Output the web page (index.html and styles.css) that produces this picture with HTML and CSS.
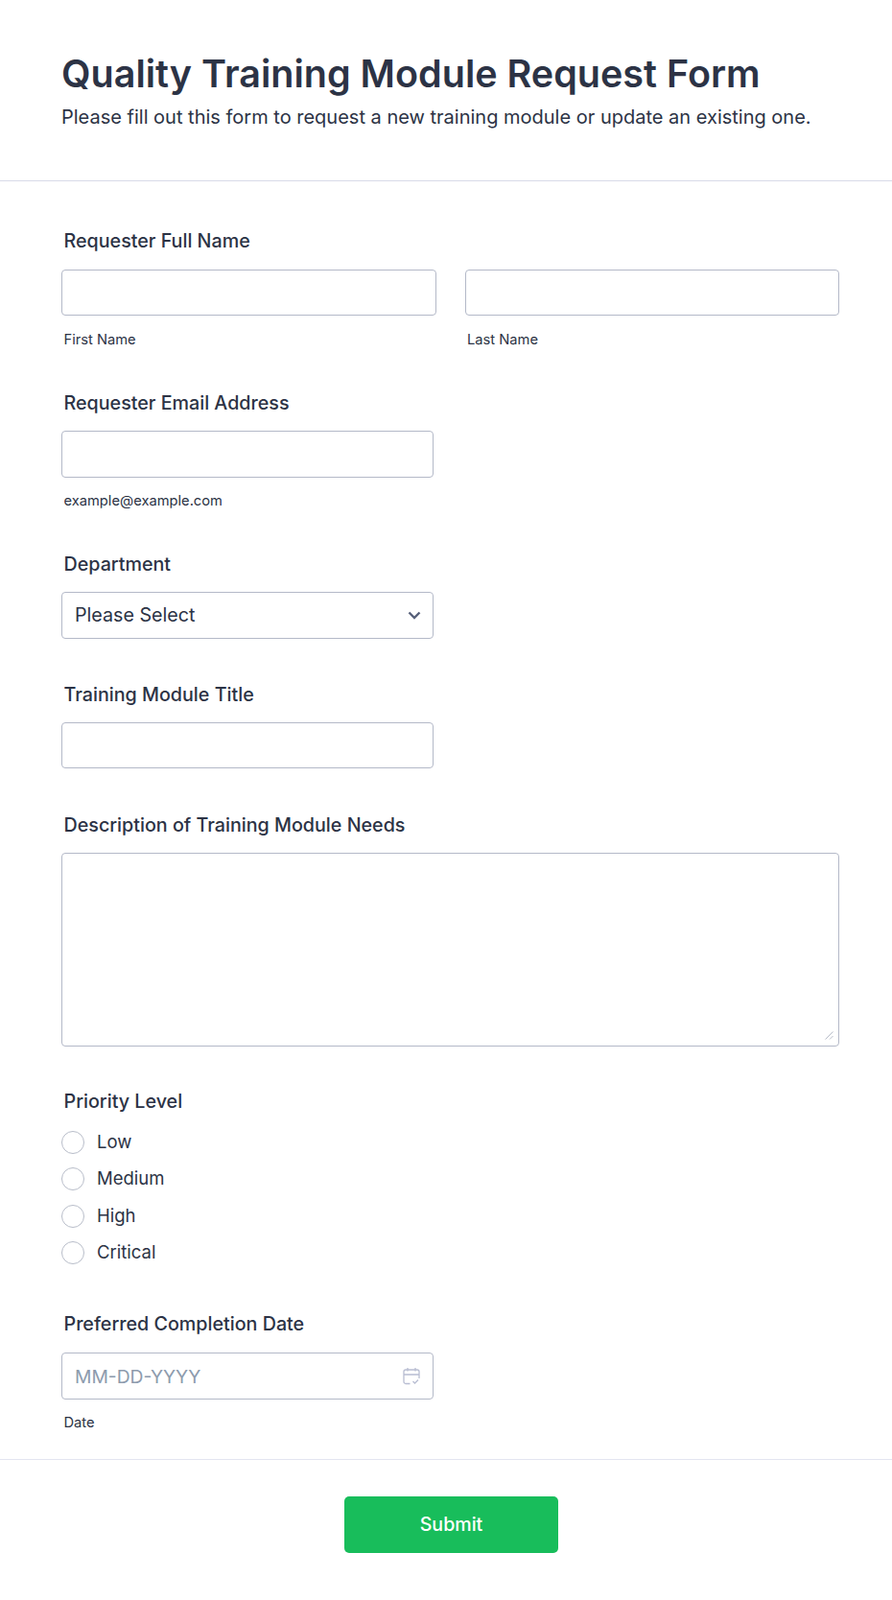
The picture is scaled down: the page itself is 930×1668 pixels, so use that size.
FILE: index.html
```html
<!DOCTYPE html>
<html lang="en">
<head>
  <meta charset="UTF-8" />
  <title>Quality Training Module Request Form</title>
  <link rel="stylesheet" href="styles.css">
</head>
<body>

<header class="form-header">
  <h1>Quality Training Module Request Form</h1>
  <p>Please fill out this form to request a new training module or update an existing one.</p>
</header>

<form class="form-body">
  <div class="field with-sub">
    <label class="field-label">Requester Full Name</label>
    <div class="name-row">
      <div class="name-col">
        <input class="text-input" type="text">
        <span class="sub-label">First Name</span>
      </div>
      <div class="name-col">
        <input class="text-input" type="text">
        <span class="sub-label">Last Name</span>
      </div>
    </div>
  </div>

  <div class="field with-sub">
    <label class="field-label">Requester Email Address</label>
    <input class="text-input short" type="text">
    <span class="sub-label">example@example.com</span>
  </div>

  <div class="field">
    <label class="field-label">Department</label>
    <div class="select-box short">
      <span>Please Select</span>
      <svg class="chevron" width="14" height="9" viewBox="0 0 14 9"><path d="M1.500 1.500 7 7l5.500-5.500" fill="none" stroke="#57607a" stroke-width="2.400"/></svg>
    </div>
  </div>

  <div class="field module-title">
    <label class="field-label">Training Module Title</label>
    <input class="text-input short" type="text">
  </div>

  <div class="field description">
    <label class="field-label">Description of Training Module Needs</label>
    <div class="area-wrap">
      <textarea class="text-area"></textarea>
      <svg class="area-grip" width="9" height="9" viewBox="0 0 9 9" fill="none" stroke="#b8bdc9" stroke-width="1"><path d="M.5 8.500l8-8M5 8.500l3.500-3.500"/></svg>
    </div>
  </div>

  <div class="field priority">
    <label class="field-label">Priority Level</label>
    <div class="radio-list">
      <div class="radio-row"><span class="radio"></span>Low</div>
      <div class="radio-row"><span class="radio"></span>Medium</div>
      <div class="radio-row"><span class="radio"></span>High</div>
      <div class="radio-row"><span class="radio"></span>Critical</div>
    </div>
  </div>

  <div class="field last">
    <label class="field-label date-label">Preferred Completion Date</label>
    <div class="date-box short">
      <span>MM-DD-YYYY</span>
      <svg width="18" height="19" viewBox="0 0 18 19" fill="none" stroke="#b8bdd2" stroke-width="1.300"><path d="M7.500 17.500H3a2 2 0 0 1-2-2V5a2 2 0 0 1 2-2h12a2 2 0 0 1 2 2v7M1 8h16M5 1v3.500M13 1v3.500M10.500 15l2 2 3.500-3.500"/></svg>
    </div>
    <span class="sub-label">Date</span>
  </div>

  <div class="form-footer">
    <button class="submit-btn" type="button">Submit</button>
  </div>
</form>

</body>
</html>
```

FILE: styles.css
```css
body {
  font-family: Inter, sans-serif;
  background: #fff;
  color: #2c3345;
  margin: 0;
  padding: 0;
}
.form-header {
  height: 189px;
  box-sizing: border-box;
  padding: 52px 64px 0;
  border-bottom: 1px solid #d8dae9;
}
.form-header h1 {
  font-size: 39.500px;
  line-height: 50px;
  font-weight: 600;
  margin: 0;
}
.form-header p {
  font-size: 20px;
  line-height: 24px;
  margin: 8px 0 0;
}
.form-body {
  padding: 51.400px 55px 0 64px;
}
.field {
  margin-bottom: 46.800px;
}
.field.with-sub {
  margin-bottom: 46.430px;
}
.field.module-title {
  margin-bottom: 47.800px;
}
.field.description {
  margin-bottom: 46.040px;
}
.field.priority {
  margin-bottom: 51px;
}
.field.last {
  margin-bottom: 30px;
}
.field-label {
  display: block;
  font-size: 19.700px;
  line-height: 22px;
  font-weight: 500;
  margin: 0 0 18.200px 2.500px;
}
.date-label {
  margin-bottom: 19.300px;
}
.name-row {
  display: flex;
  gap: 30px;
}
.name-col {
  flex: 1;
}
.text-input, .select-box, .date-box, .text-area {
  display: block;
  box-sizing: border-box;
  width: 100%;
  height: 48.670px;
  border: 1px solid #b4b9c8;
  border-radius: 4px;
  background: #fff;
  font-family: Inter, sans-serif;
  font-size: 19.700px;
  color: #2c3345;
  margin: 0;
}
.short {
  width: 388px;
}
.select-box, .date-box {
  display: flex;
  align-items: center;
  justify-content: space-between;
  padding: 0 12px 0 13px;
}
.date-box {
  color: #8d9bad;
  font-size: 19.300px;
  padding-right: 13px;
  margin-bottom: -0.500px;
}
.area-wrap {
  position: relative;
}
.text-area {
  height: 201.500px;
  resize: none;
}
.area-grip {
  position: absolute;
  right: 6px;
  bottom: 7px;
}
.sub-label {
  display: block;
  font-size: 14.700px;
  line-height: 18px;
  margin: 15.500px 0 -0.500px 2.500px;
}
.radio-list {
  display: flex;
  flex-direction: column;
  gap: 14.300px;
  margin-top: 20.100px;
}
.radio-row {
  display: flex;
  align-items: flex-start;
  gap: 13px;
  font-size: 18.500px;
  line-height: 23px;
}
.radio {
  box-sizing: border-box;
  flex: none;
  width: 24px;
  height: 24px;
  border: 1.500px solid #b8bdc9;
  border-radius: 50%;
}
.form-footer {
  margin: 0 -55px 0 -64px;
  border-top: 1px solid #e3e5f0;
  padding: 37.500px 0 48px 11px;
  display: flex;
  justify-content: center;
}
.submit-btn {
  width: 223px;
  height: 59px;
  border: 0;
  border-radius: 5px;
  background: #18bd5b;
  color: #fff;
  font-family: Inter, sans-serif;
  font-size: 19.600px;
  font-weight: 500;
}
```
